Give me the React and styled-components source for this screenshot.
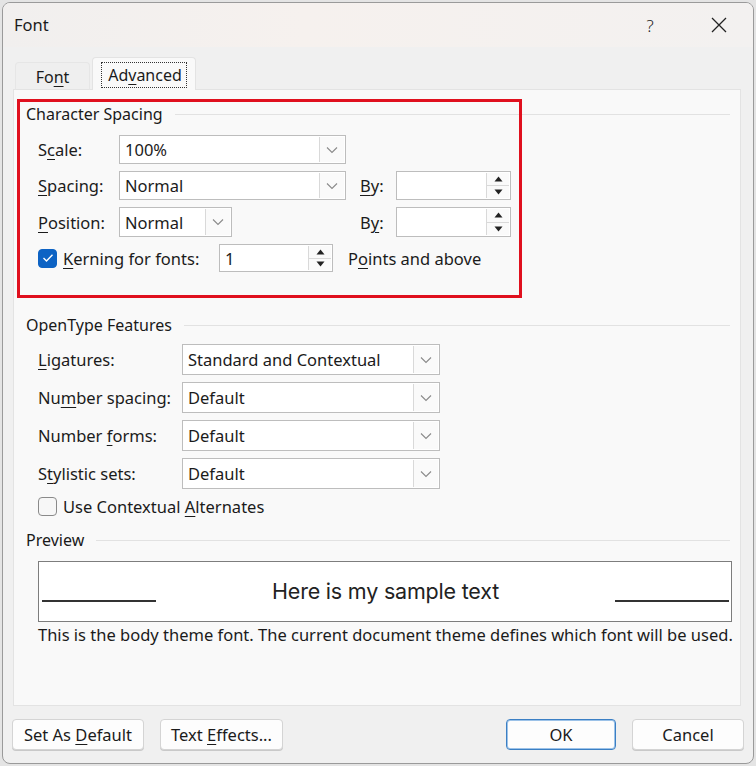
import React from "react";
import styled, { createGlobalStyle } from "styled-components";

const Global = createGlobalStyle`
  html, body { margin: 0; padding: 0; background: #e4e4e4; }
  body { font-family: "Noto Sans", "Open Sans", sans-serif; color: #1b1b1b; }
  * { box-sizing: border-box; }
`;

const Dialog = styled.div`
  width: 752px;
  height: 762px;
  margin: 2px 0 0 2px;
  border: 1px solid #9a9a9a;
  border-radius: 8px;
  background: #f0f0f0;
  overflow: hidden;
  display: flex;
  flex-direction: column;
  font-size: 16px;
`;

const TitleBar = styled.div`
  height: 44px;
  flex: none;
  display: flex;
  align-items: center;
  padding-left: 11px;
  background: linear-gradient(90deg, #f1efee 0%, #f6f1ee 40%, #f3f1f0 100%);
`;

const Title = styled.div`
  font-size: 16.5px;
  flex: 1;
  margin-top: -2px;
`;

const TitleButton = styled.div`
  width: ${p => p.$w}px;
  margin-right: ${p => p.$mr || 0}px;
  display: flex;
  align-items: center;
  justify-content: center;
  color: #222;
  font-size: 17px;
  font-weight: 300;
`;

const Body = styled.div`
  flex: 1;
  display: flex;
  flex-direction: column;
  padding: 10px 9px 0 10px;
`;

const Tabs = styled.div`
  display: flex;
  align-items: flex-end;
  height: 33px;
  padding-left: 2px;
  position: relative;
  z-index: 1;
`;

const Tab = styled.div`
  height: ${p => (p.$active ? 33 : 28)}px;
  width: ${p => p.$w}px;
  display: flex;
  align-items: center;
  justify-content: center;
  font-size: 16px;
  background: ${p => (p.$active ? "#f9f9f9" : "#efefef")};
  border: 1px solid ${p => (p.$active ? "#e3e3e3" : "#e6e6e6")};
  border-bottom: ${p => (p.$active ? "none" : "1px solid #e3e3e3")};
  border-radius: 4px 4px 0 0;
  margin-right: ${p => (p.$active ? 0 : 2)}px;
  padding-top: ${p => (p.$active ? 0 : 2)}px;
`;

const FocusText = styled.span`
  outline: 1px dotted #333;
  outline-offset: 0;
  padding: 1px 4px 1px 6px;
  margin-top: 2px;
`;

const Panel = styled.div`
  position: relative;
  width: 728px;
  height: 617px;
  margin-top: -1px;
  background: #f9f9f9;
  border: 1px solid #e3e3e3;
  padding: 13px 10px 0 12px;
  display: flex;
  flex-direction: column;
`;

const Highlight = styled.div`
  position: absolute;
  left: 3px;
  top: 9px;
  width: 505px;
  height: 199px;
  border: 3px solid #e0101e;
  pointer-events: none;
`;

const GroupHeader = styled.div`
  display: flex;
  align-items: center;
  height: 22px;
  font-size: 16px;
  color: #1a1a1a;
  margin-top: ${p => p.$mt || 0}px;
  &::after {
    content: "";
    flex: 1;
    height: 1px;
    background: #e2e2e2;
    margin-left: 12px;
    margin-top: 1px;
  }
`;

const Rows = styled.div`
  display: flex;
  flex-direction: column;
  gap: ${p => p.$gap}px;
  padding-left: 12px;
  margin-top: ${p => p.$mt}px;
`;

const Row = styled.div`
  display: flex;
  align-items: center;
  height: ${p => p.$h || 29}px;
`;

const Label = styled.div`
  width: ${p => (p.$w ? `${p.$w}px` : "auto")};
  flex: none;
  font-size: 16.5px;
  white-space: nowrap;
  margin-left: ${p => p.$ml || 0}px;
`;

const U = styled.span`
  text-decoration: underline;
  text-underline-offset: 3px;
  text-decoration-thickness: 1px;
`;

const Select = styled.div`
  width: ${p => p.$w}px;
  height: ${p => p.$h || 29}px;
  background: #fff;
  border: 1px solid #bdbdbd;
  display: flex;
  align-items: stretch;
  flex: none;
`;

const SelectValue = styled.div`
  flex: 1;
  display: flex;
  align-items: center;
  padding-left: 5px;
  font-size: 16.5px;
  white-space: nowrap;
  overflow: hidden;
`;

const Chevron = styled.div`
  width: 25px;
  border-left: 1px solid #d9d9d9;
  background: #fafafa;
  display: flex;
  align-items: center;
  justify-content: center;
  margin: 1px 1px 1px 0;
`;

const Spinner = styled.div`
  width: ${p => p.$w}px;
  height: ${p => p.$h || 29}px;
  margin-left: ${p => p.$ml || 0}px;
  background: #fff;
  border: 1px solid #bdbdbd;
  display: flex;
  flex: none;
`;

const SpinValue = styled.div`
  flex: 1;
  display: flex;
  align-items: center;
  padding-left: 5px;
  font-size: 16.5px;
`;

const SpinButtons = styled.div`
  width: 23px;
  display: flex;
  flex-direction: column;
  border-left: 1px solid #d9d9d9;
  margin: 1px 1px 1px 0;
`;

const SpinButton = styled.div`
  flex: 1;
  display: flex;
  align-items: center;
  justify-content: center;
  background: #fafafa;
  & + & { border-top: 1px solid #d9d9d9; }
`;

const Check = styled.div`
  width: 19px;
  height: 19px;
  flex: none;
  border-radius: 4px;
  background: ${p => (p.$on ? "#0d63c4" : "#f7f7f7")};
  border: 1px solid ${p => (p.$on ? "#0d63c4" : "#8a8a8a")};
  display: flex;
  align-items: center;
  justify-content: center;
  margin-right: 6px;
`;

const PreviewBox = styled.div`
  margin: 10px 0 0 12px;
  width: 694px;
  height: 61px;
  background: #fff;
  border: 1px solid #7d7d7d;
  display: flex;
  align-items: center;
  justify-content: space-between;
  padding: 0 2px 0 3px;
`;

const PreviewLine = styled.div`
  width: 114px;
  height: 2px;
  background: #333;
  margin-top: 18px;
`;

const PreviewText = styled.div`
  font-family: "Inter", "Liberation Sans", sans-serif;
  font-size: 21.5px;
  color: #222;
  letter-spacing: -0.2px;
  margin-top: -1px;
`;

const Note = styled.div`
  font-size: 16.5px;
  margin: 1px 0 0 12px;
  white-space: nowrap;
`;

const Footer = styled.div`
  display: flex;
  align-items: center;
  padding: 13px 0 0 0;
  margin-left: -1px;
`;

const Button = styled.div`
  width: ${p => p.$w}px;
  height: 31px;
  margin-left: ${p => p.$ml || 0}px;
  background: #fdfdfd;
  border: 1px solid ${p => (p.$primary ? "#3b7fc4" : "#d4d4d4")};
  box-shadow: ${p => (p.$primary ? "inset 0 0 0 1px #9cc2e8" : "0 1px 0 #c9c9c9")};
  border-radius: 4px;
  display: flex;
  align-items: center;
  justify-content: center;
  font-size: 16.5px;
`;

const ButtonText = styled.span`
  white-space: nowrap;
`;

const ChevronIcon = () => (
  <svg width="12" height="8" viewBox="0 0 12 8">
    <path d="M1 1.5 L6 6.5 L11 1.5" fill="none" stroke="#8a8a8a" strokeWidth="1.1" />
  </svg>
);

const Tri = ({ up }) => (
  <svg width="9" height="6" viewBox="0 0 9 6">
    <path d={up ? "M0.5 5.5 L4.5 0.5 L8.5 5.5 Z" : "M0.5 0.5 L4.5 5.5 L8.5 0.5 Z"} fill="#222" />
  </svg>
);

const Dropdown = ({ w, h, value }) => (
  <Select $w={w} $h={h}>
    <SelectValue>{value}</SelectValue>
    <Chevron>
      <ChevronIcon />
    </Chevron>
  </Select>
);

const Spin = ({ w, h, ml, value }) => (
  <Spinner $w={w} $h={h} $ml={ml}>
    <SpinValue>{value}</SpinValue>
    <SpinButtons>
      <SpinButton><Tri up /></SpinButton>
      <SpinButton><Tri /></SpinButton>
    </SpinButtons>
  </Spinner>
);

const CheckMark = () => (
  <svg width="12" height="10" viewBox="0 0 12 10">
    <path d="M1.5 5 L4.5 8 L10.5 1.8" fill="none" stroke="#fff" strokeWidth="1.4" />
  </svg>
);

export default function App() {
  return (
    <>
      <Global />
      <Dialog>
        <TitleBar>
          <Title>Font</Title>
          <TitleButton $w={46} $mr={12}>?</TitleButton>
          <TitleButton $w={68}>
            <svg width="16" height="16" viewBox="0 0 16 16">
              <path d="M1 1 L15 15 M15 1 L1 15" stroke="#222" strokeWidth="1.3" />
            </svg>
          </TitleButton>
        </TitleBar>
        <Body>
          <Tabs>
            <Tab $w={75}><ButtonText>Fo<U>n</U>t</ButtonText></Tab>
            <Tab $w={104} $active>
              <FocusText>Ad<U>v</U>anced</FocusText>
            </Tab>
          </Tabs>
          <Panel>
            <GroupHeader>Character Spacing</GroupHeader>
            <Rows $gap={7} $mt={10}>
              <Row>
                <Label $w={81}>S<U>c</U>ale:</Label>
                <Dropdown w={227} value="100%" />
              </Row>
              <Row>
                <Label $w={81}><U>S</U>pacing:</Label>
                <Dropdown w={227} value="Normal" />
                <Label $w={36} $ml={14}><U>B</U>y:</Label>
                <Spin w={115} />
              </Row>
              <Row $h={30}>
                <Label $w={81}><U>P</U>osition:</Label>
                <Dropdown w={113} h={30} value="Normal" />
                <Label $w={36} $ml={128}>B<U>y</U>:</Label>
                <Spin w={115} h={30} />
              </Row>
              <Row $h={28}>
                <Check $on><CheckMark /></Check>
                <Label $w={156}><U>K</U>erning for fonts:</Label>
                <Spin w={114} h={28} value="1" />
                <Label $ml={15}>P<U>o</U>ints and above</Label>
              </Row>
            </Rows>

            <GroupHeader $mt={42}>OpenType Features</GroupHeader>
            <Rows $gap={7} $mt={8}>
              <Row $h={31}>
                <Label $w={144}><U>L</U>igatures:</Label>
                <Dropdown w={258} h={31} value="Standard and Contextual" />
              </Row>
              <Row $h={31}>
                <Label $w={144}>Nu<U>m</U>ber spacing:</Label>
                <Dropdown w={258} h={31} value="Default" />
              </Row>
              <Row $h={31}>
                <Label $w={144}>Number <U>f</U>orms:</Label>
                <Dropdown w={258} h={31} value="Default" />
              </Row>
              <Row $h={31}>
                <Label $w={144}>S<U>t</U>ylistic sets:</Label>
                <Dropdown w={258} h={31} value="Default" />
              </Row>
              <Row $h={21}>
                <Check />
                <Label>Use Contextual <U>A</U>lternates</Label>
              </Row>
            </Rows>

            <GroupHeader $mt={12}>Preview</GroupHeader>
            <PreviewBox>
              <PreviewLine />
              <PreviewText>Here is my sample text</PreviewText>
              <PreviewLine />
            </PreviewBox>
            <Note>This is the body theme font. The current document theme defines which font will be used.</Note>
            <Highlight />
          </Panel>
          <Footer>
            <Button $w={132}><ButtonText>Set As <U>D</U>efault</ButtonText></Button>
            <Button $w={123} $ml={16}><ButtonText>Text <U>E</U>ffects...</ButtonText></Button>
            <Button $w={110} $ml={223} $primary><ButtonText>OK</ButtonText></Button>
            <Button $w={112} $ml={16}><ButtonText>Cancel</ButtonText></Button>
          </Footer>
        </Body>
      </Dialog>
    </>
  );
}
